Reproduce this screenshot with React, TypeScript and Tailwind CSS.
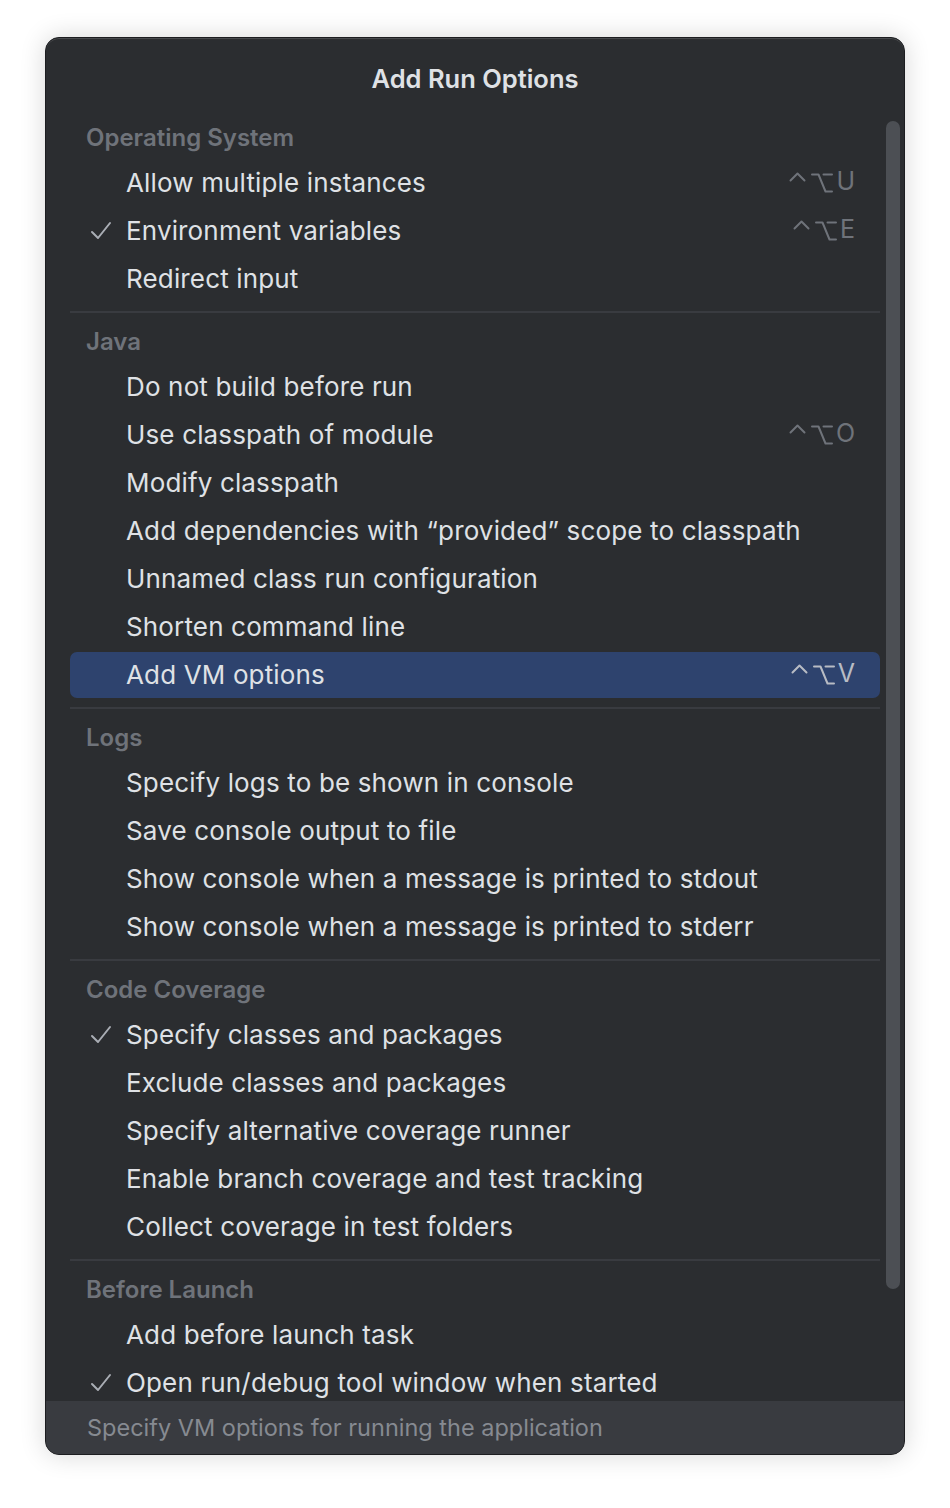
import React from 'react';

type Item = { label: string; checked?: boolean; shortcut?: string; selected?: boolean };
type Section = { title: string; items: Item[] };

const sections: Section[] = [
  {
    title: 'Operating System',
    items: [
      { label: 'Allow multiple instances', shortcut: 'U' },
      { label: 'Environment variables', checked: true, shortcut: 'E' },
      { label: 'Redirect input' },
    ],
  },
  {
    title: 'Java',
    items: [
      { label: 'Do not build before run' },
      { label: 'Use classpath of module', shortcut: 'O' },
      { label: 'Modify classpath' },
      { label: 'Add dependencies with \u201cprovided\u201d scope to classpath' },
      { label: 'Unnamed class run configuration' },
      { label: 'Shorten command line' },
      { label: 'Add VM options', shortcut: 'V', selected: true },
    ],
  },
  {
    title: 'Logs',
    items: [
      { label: 'Specify logs to be shown in console' },
      { label: 'Save console output to file' },
      { label: 'Show console when a message is printed to stdout' },
      { label: 'Show console when a message is printed to stderr' },
    ],
  },
  {
    title: 'Code Coverage',
    items: [
      { label: 'Specify classes and packages', checked: true },
      { label: 'Exclude classes and packages' },
      { label: 'Specify alternative coverage runner' },
      { label: 'Enable branch coverage and test tracking' },
      { label: 'Collect coverage in test folders' },
    ],
  },
  {
    title: 'Before Launch',
    items: [
      { label: 'Add before launch task' },
      { label: 'Open run/debug tool window when started', checked: true },
    ],
  },
];

const CheckMark = () => (
  <svg width="22" height="20" viewBox="0 0 22 20" fill="none" className="text-[#a9adb4]">
    <path d="M2 11 L8 17 L20 2" stroke="currentColor" strokeWidth="2" strokeLinecap="round" strokeLinejoin="round" />
  </svg>
);

// ^ + option key glyph + letter, drawn like the macOS shortcut hint
const Shortcut: React.FC<{ letter: string; selected?: boolean }> = ({ letter, selected }) => (
  <span
    className={`flex items-start gap-[3px] text-[25px] leading-[20px] ${selected ? 'text-[#b8bcc4]' : 'text-[#6f737a]'}`}
  >
    <svg width="17" height="10" viewBox="0 0 17 10" fill="none" className="mt-[-1px] mr-[2px]">
      <path d="M1.5 8.5 L8.5 1.5 L15.5 8.5" stroke="currentColor" strokeWidth="2" strokeLinecap="round" strokeLinejoin="round" />
    </svg>
    <svg width="22" height="20" viewBox="0 0 22 20" fill="none">
      <path d="M1 1.5 H7.5 L14.5 18.5 H21 M12.5 1.5 H21" stroke="currentColor" strokeWidth="2" strokeLinecap="round" strokeLinejoin="round" />
    </svg>
    <span className="leading-[20px] -mt-[2px]">{letter}</span>
  </span>
);

const Row: React.FC<{ item: Item }> = ({ item }) => (
  <div className="h-12 py-px">
    <div
      className={`flex items-center h-full rounded-[7px] pl-[20px] pr-[25px] ${
        item.selected ? 'bg-[#2e436e]' : ''
      }`}
    >
      <div className="w-[36px] flex items-center">{item.checked && <CheckMark />}</div>
      <span className="flex-1 text-[26px] leading-[32px] -mt-[1px] text-[#dfe1e5] tracking-[0.15px] whitespace-nowrap">
        {item.label}
      </span>
      {item.shortcut && <Shortcut letter={item.shortcut} selected={item.selected} />}
    </div>
  </div>
);

export default function App() {
  return (
    <div className="bg-white min-h-[1508px] pt-[37px] px-[45px]" style={{ fontFamily: 'Inter, "Noto Sans", sans-serif' }}>
      <div className="relative flex flex-col h-[1418px] rounded-[14px] overflow-hidden bg-[#2b2d30] border border-[#1c1d20] shadow-[0_0_26px_rgba(0,0,0,0.16),inset_0_1px_0_rgba(255,255,255,0.14)]">
        <div className="h-[79px] shrink-0 pt-[25px] text-center">
          <span className="text-[25.5px] leading-8 font-semibold text-[#dfe1e5]">Add Run Options</span>
        </div>

        <div className="relative flex-1 overflow-hidden">
          <div className="pl-[24px] pr-[24px]">
            {sections.map((section, i) => (
              <div key={section.title}>
                {i > 0 && (
                  <div className="h-[18px] flex items-center">
                    <div className="w-full h-[2px] bg-[#393b40]" />
                  </div>
                )}
                <div className="h-[42px] flex items-center pl-[16px]">
                  <span className="text-[24px] font-semibold text-[#6f737a]">{section.title}</span>
                </div>
                {section.items.map((item) => (
                  <Row key={item.label} item={item} />
                ))}
              </div>
            ))}
          </div>
          <div className="absolute top-[4px] right-[4px] w-[14px] h-[1168px] rounded-full bg-[#4c4f54]" />
        </div>

        <div className="h-[53px] shrink-0 flex items-center pl-[41px] bg-[#393b40]">
          <span className="text-[23.5px] text-[#868a91]">Specify VM options for running the application</span>
        </div>
      </div>
    </div>
  );
}
